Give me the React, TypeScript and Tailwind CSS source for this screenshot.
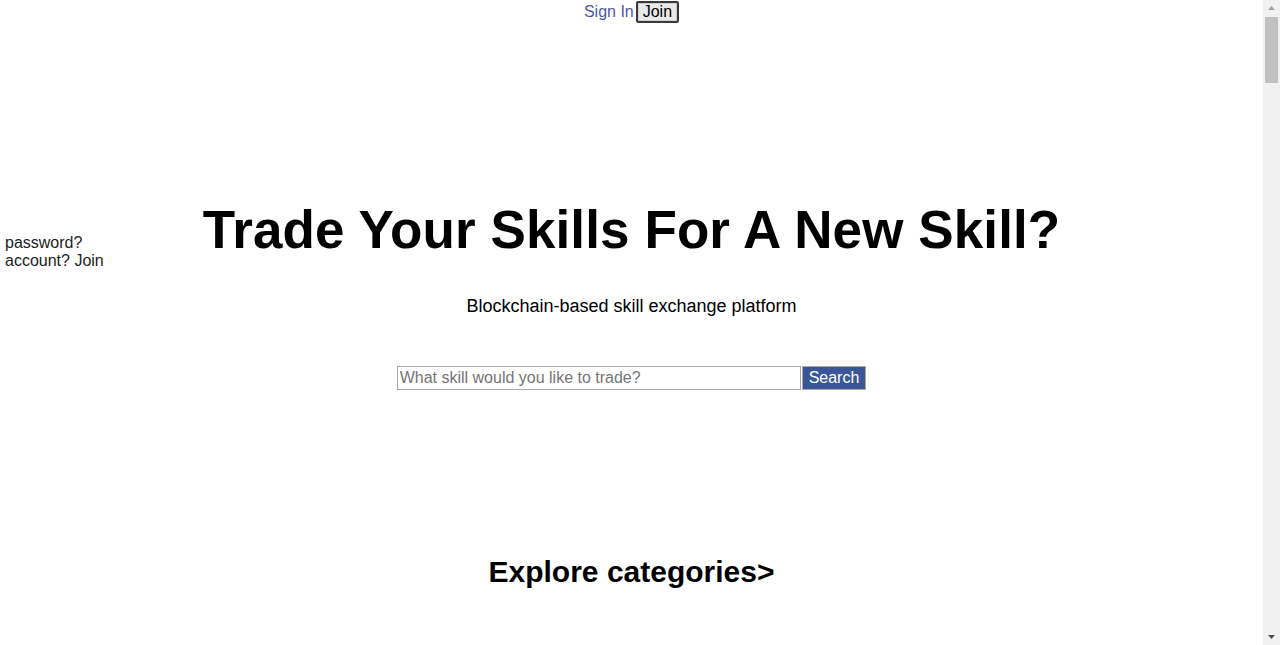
import React from 'react'

const font = "font-['Liberation_Sans',Arial,sans-serif]"

const Scrollbar: React.FC = () => (
    <div className="w-[17px] shrink-0 bg-[#f1f1f1] flex flex-col items-center">
        <svg width="17" height="17" viewBox="0 0 17 17">
            <path d="M5 10 L8.5 6 L12 10 Z" fill="#a3a3a3" />
        </svg>
        <div className="w-[13px] h-[66px] bg-[#c1c1c1]" />
        <div className="flex-1" />
        <svg width="17" height="17" viewBox="0 0 17 17">
            <path d="M5 7 L8.5 11 L12 7 Z" fill="#505050" />
        </svg>
    </div>
)

const App: React.FC = () => {
    return (
        <div className={`flex h-[645px] overflow-hidden bg-white text-black ${font}`}>
            <div className="relative flex-1 overflow-hidden">
                {/* Top nav */}
                <nav className="flex justify-center items-start pt-[1px] h-[23px]">
                    <a href="#" className="text-[16px] text-[#4f57a6] leading-[21px]">
                        Sign In
                    </a>
                    <button className="ml-[2px] h-[22px] px-[5px] text-[16px] leading-none bg-[#e9e9e9] border-2 border-[#3a3a3a] rounded-[2px] shadow-[inset_0_0_0_1px_#cfcfcf]">
                        Join
                    </button>
                </nav>

                {/* Leftover sign-in form text */}
                <div className="absolute left-[5px] top-[234px] text-[16px] leading-[18px] text-[#222]">
                    <p>password?</p>
                    <p>account? Join</p>
                </div>

                {/* Hero */}
                <main className="flex flex-col items-center pb-[400px]">
                    <h1 className="mt-[176px] text-[53px] font-bold leading-[61px] tracking-[0.1px]">
                        Trade Your Skills For A New Skill?
                    </h1>
                    <p className="mt-[36px] text-[18px] leading-[21px]">
                        Blockchain-based skill exchange platform
                    </p>

                    <form className="mt-[49px] flex items-center" onSubmit={(e) => e.preventDefault()}>
                        <input
                            type="text"
                            placeholder="What skill would you like to trade?"
                            className="w-[404px] h-[24px] px-[2px] text-[16px] border border-[#a9a9a9] placeholder:text-[#757575] outline-none"
                        />
                        <button className="ml-[1px] h-[24px] px-[6px] text-[16px] leading-none text-white bg-[#3b5696] border border-[#a8a8a8]">
                            Search
                        </button>
                    </form>

                    <h2 className="mt-[164px] text-[30px] font-bold leading-[35px]">
                        Explore categories&gt;
                    </h2>
                </main>
            </div>
            <Scrollbar />
        </div>
    )
}

export default App
